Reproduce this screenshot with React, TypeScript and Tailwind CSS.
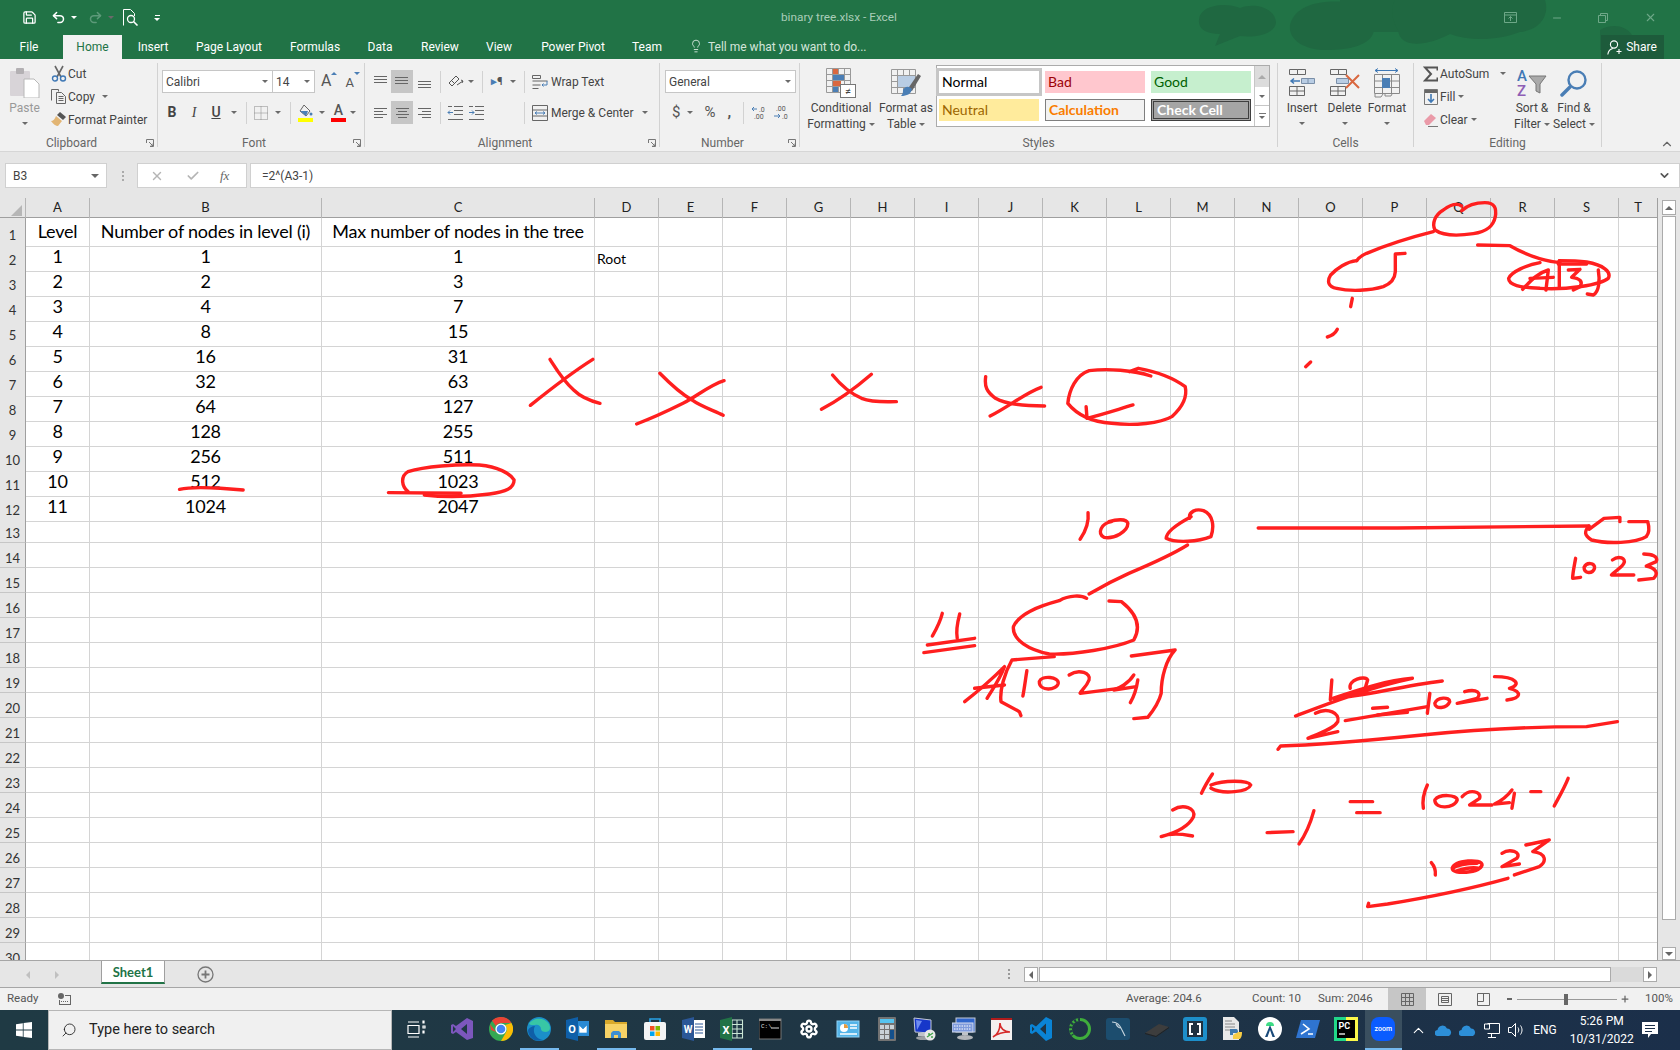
import type { ReactNode } from "react"
import { Lightbulb, Minus, Plus, Redo2, Save, Search, Settings, Undo2, X, Check, ChevronUp, ChevronDown } from "lucide-react"

const COLUMNS = ["A", "B", "C", "D", "E", "F", "G", "H", "I", "J", "K", "L", "M", "N", "O", "P", "Q", "R", "S", "T"]
const GRID = "grid grid-cols-[26px_64px_232px_273px_repeat(16,64px)_39px]"

const ROWS: string[][] = [
  ["Level", "Number of nodes in level (i)", "Max number of nodes in the tree"],
  ["1", "1", "1"],
  ["2", "2", "3"],
  ["3", "4", "7"],
  ["4", "8", "15"],
  ["5", "16", "31"],
  ["6", "32", "63"],
  ["7", "64", "127"],
  ["8", "128", "255"],
  ["9", "256", "511"],
  ["10", "512", "1023"],
  ["11", "1024", "2047"],
]

const TABS = [
  { label: "File", width: "w-[58px] mr-[5px]" },
  { label: "Home", width: "w-[59px]" },
  { label: "Insert", width: "w-[62px]" },
  { label: "Page Layout", width: "w-[90px]" },
  { label: "Formulas", width: "w-[82px]" },
  { label: "Data", width: "w-[48px]" },
  { label: "Review", width: "w-[72px]" },
  { label: "View", width: "w-[46px]" },
  { label: "Power Pivot", width: "w-[102px]" },
  { label: "Team", width: "w-[46px]" },
]

function Caret({ className = "" }: { className?: string }) {
  return <span className={`inline-block h-0 w-0 border-x-[3px] border-t-[3px] border-x-transparent border-t-[#6a6a6a] ${className}`} />
}

function Group({ width, label, launcher, children }: { width: string; label: string; launcher?: boolean; children: ReactNode }) {
  return (
    <div className={`flex h-[84px] flex-col border-r border-[#d2d2d2] ${width}`}>
      <div className="h-[73px]">{children}</div>
      <div className={`relative h-[11px] text-center text-[12px] leading-[14px] text-[#666] ${launcher ? "pr-[14px]" : ""}`}>
        {label}
        {launcher && (
          <svg className="absolute right-[3px] top-[3px]" width="8" height="8" viewBox="0 0 8 8" fill="none" stroke="#777">
            <path d="M.5 4V.5H7.5V7.5H4M3 3l4 4M4.5 7H7V4.5" />
          </svg>
        )}
      </div>
    </div>
  )
}

function Big({ width, icon, lines, caret, dim }: { width: string; icon: ReactNode; lines: string[]; caret?: boolean; dim?: boolean }) {
  return (
    <div className={`flex shrink-0 flex-col items-center pt-[4px] text-[12px] leading-[16px] ${dim ? "text-[#999]" : "text-[#444]"} ${width}`}>
      <div className="flex h-[31px] items-center">{icon}</div>
      <div className="mt-[2px] whitespace-nowrap">{lines[0]}</div>
      {lines[1] ? (
        <div className="flex items-center gap-[3px] whitespace-nowrap">
          {lines[1]}
          {caret && <Caret />}
        </div>
      ) : (
        <Caret className="mt-[6px]" />
      )}
    </div>
  )
}

function Combo({ width, text, className = "" }: { width: string; text: string; className?: string }) {
  return (
    <div className={`flex h-[23px] items-center justify-between border border-[#c6c6c6] bg-white px-[3px] text-[12px] text-[#444] ${width} ${className}`}>
      {text}
      <Caret className="mr-[1px]" />
    </div>
  )
}

function Sep({ className = "" }: { className?: string }) {
  return <span className={`h-[22px] w-px shrink-0 bg-[#d2d2d2] ${className}`} />
}

function Lines({ rows }: { rows: number[][] }) {
  return (
    <svg width="14" height="16" viewBox="0 0 14 16" stroke="#666" fill="none">
      {rows.map(([x1, x2, y]) => (
        <path key={`${x1}-${y}`} d={`M${x1} ${y}.5H${x2}`} />
      ))}
    </svg>
  )
}

function AlignBtn({ rows, on, className = "" }: { rows: number[][]; on?: boolean; className?: string }) {
  return (
    <span className={`flex h-[23px] w-[22px] shrink-0 items-center justify-center ${on ? "bg-[#c6c6c6]" : ""} ${className}`}>
      <Lines rows={rows} />
    </span>
  )
}

function PasteIcon() {
  return (
    <svg width="30" height="31" viewBox="0 0 30 31">
      <rect x="0" y="4" width="20" height="25" rx="1" fill="#d8d4d8" />
      <rect x="6" y="1" width="8" height="6" rx="1" fill="#b3b0b3" />
      <path d="M14 12h10l5 5v14H14z" fill="#fff" stroke="#b8b8b8" />
    </svg>
  )
}

function CutIcon() {
  return (
    <svg width="16" height="17" viewBox="0 0 16 17" fill="none">
      <path d="M4 1l6 11M12 1L6 12" stroke="#666" strokeWidth="1.6" />
      <circle cx="4" cy="13.5" r="2.5" stroke="#3f78b5" strokeWidth="1.4" />
      <circle cx="12" cy="13.5" r="2.5" stroke="#3f78b5" strokeWidth="1.4" />
    </svg>
  )
}

function CopyIcon() {
  return (
    <svg width="15" height="15" viewBox="0 0 15 15" fill="none" stroke="#666">
      <path d="M.5 11.5V.5h7v2M5.5 3.5h5l4 4v7h-9z" />
      <path d="M7.5 7.5h5M7.5 9.5h5M7.5 11.5h5" />
    </svg>
  )
}

function PainterIcon() {
  return (
    <svg width="16" height="15" viewBox="0 0 16 15">
      <path d="M9 0l6 5-3 3-6-5z" fill="#555" />
      <path d="M5 4l6 5-4 5c-2 0-5-2-7-5 2 0 4-2 5-5z" fill="#e2b574" />
    </svg>
  )
}

function Ink({ ds }: { ds: string[] }) {
  return (
    <>
      {ds.map((d) => (
        <path key={d} d={d} vectorEffect="non-scaling-stroke" />
      ))}
    </>
  )
}

const INK_LEFT = [
  "M440 898C470 890 500 892 540 895L596 900",
  "M1000 905C985 890 980 860 1000 845C1040 830 1120 822 1175 825C1220 830 1250 850 1260 870C1260 895 1240 905 1200 912C1150 920 1090 922 1040 915",
  "M952 908L1130 910",
]

const INK_MIDDLE = [
  "M112 508C125 535 140 570 165 600C180 620 200 632 224 640",
  "M208 508C170 540 120 590 68 646",
  "M358 550C380 580 410 615 430 630C450 650 480 662 500 676",
  "M502 572C470 585 440 620 410 640C380 660 340 685 306 702",
  "M745 555C760 580 785 610 810 625C835 638 860 635 888 635",
  "M832 553C800 590 760 630 720 658",
  "M1088 560C1085 590 1090 605 1110 625C1135 645 1180 648 1220 648",
  "M1212 592C1175 610 1140 650 1098 678",
  "M1458 558C1420 540 1360 535 1320 542C1290 555 1275 600 1272 640C1290 670 1320 695 1370 700C1420 708 1480 700 1505 680C1530 650 1540 620 1535 590C1510 565 1470 545 1430 535L1410 545",
  "M1418 645C1380 660 1345 675 1315 685L1313 650",
]

const INK_TOP_RIGHT = [
  "M665 62C680 48 700 38 735 38C765 38 770 55 766 80C760 110 740 125 700 131C660 137 610 138 585 120C575 100 585 75 610 60C630 45 650 38 665 48",
  "M580 125C520 140 440 165 380 190C365 197 355 205 350 212",
  "M350 212C320 215 290 235 272 255C260 275 265 290 290 295C330 305 390 302 430 290C455 280 465 265 466 245L466 192L495 190",
  "M713 165L810 167C850 190 900 212 960 218",
  "M900 218C860 225 815 245 806 265C805 285 840 293 900 295C980 300 1080 285 1105 265C1115 245 1090 225 1040 216C1010 212 980 212 958 212",
  "M848 298C870 275 890 250 925 240L918 300",
  "M870 265L940 262",
  "M958 212L958 295",
  "M985 240L1020 238L995 262C1020 265 1030 275 1020 290L1000 300",
  "M1075 240C1080 270 1078 305 1060 315L1042 312",
  "M955 222L1040 222",
  "M337 325L332 350",
  "M292 418C285 432 275 438 262 441",
  "M212 516L197 530",
]

const INK_BOTTOM_RIGHT = [
  "M378 98C380 125 375 150 362 178",
  "M425 125C405 130 395 160 410 172C430 178 458 155 458 130C455 115 435 118 420 125",
  "M585 110C560 130 535 155 535 175C555 190 600 185 625 170C632 140 630 105 610 92C595 85 580 95 582 115",
  "M720 144L1000 144C1150 143 1300 140 1385 138",
  "M1385 138C1375 155 1375 165 1390 180C1420 192 1480 190 1500 170C1508 155 1505 135 1503 125L1465 125",
  "M1447 125L1447 112L1415 115L1385 148",
  "M1358 235C1355 260 1352 280 1352 295L1368 292",
  "M1375 262C1380 245 1398 248 1396 265C1392 282 1375 282 1375 262",
  "M1432 240C1445 225 1460 235 1455 250C1450 265 1435 275 1430 285L1475 285",
  "M1495 222C1510 222 1525 228 1520 245L1500 258C1520 265 1525 280 1515 295L1485 300",
  "M578 195C540 230 500 255 460 280C430 300 405 320 380 342",
  "M375 355C365 345 340 345 320 362C280 378 240 400 228 440C225 480 260 510 300 522C350 525 430 505 470 480C485 440 475 400 445 365L420 363",
  "M85 400C80 430 70 455 65 468",
  "M120 402C115 430 112 450 115 475",
  "M55 495L150 475",
  "M48 518L150 497",
  "M310 530L225 540C210 580 200 630 203 665L240 695L243 707",
  "M130 665C160 630 190 590 210 560C200 600 185 630 175 655",
  "M150 625L210 615",
  "M255 572C252 600 250 625 247 648",
  "M280 605C285 585 320 590 318 610C315 632 280 635 280 605",
  "M340 585C360 565 385 580 380 600C375 620 365 630 362 640L440 625",
  "M470 585C460 610 440 625 430 630L475 620",
  "M478 600C475 630 470 650 463 668",
  "M465 528L553 510C535 540 525 590 525 640C520 670 510 690 498 712L470 716",
  "M868 600L865 660",
  "M905 625C900 600 935 585 940 600L935 625",
  "M795 708C880 660 950 620 1030 595C980 600 920 630 870 655C930 650 1000 620 1090 603",
  "M835 700C860 680 885 700 880 725C870 750 840 760 820 775L880 755",
  "M895 722C940 710 1000 695 1060 680",
  "M950 685L980 682",
  "M960 705L1020 697",
  "M1065 640L1060 700",
  "M1075 670C1080 650 1105 650 1105 665C1100 685 1075 690 1075 670",
  "M1135 635C1160 625 1170 640 1160 655L1120 670L1180 655",
  "M1195 590C1240 590 1250 615 1225 625C1250 635 1250 655 1220 660",
  "M760 808L765 798C850 795 950 780 1050 765C1180 745 1300 740 1380 740L1442 725",
  "M628 882C620 900 612 920 606 940",
  "M625 915C650 900 700 900 705 915C700 935 650 945 625 925",
  "M548 990C570 970 595 985 590 1010C580 1040 550 1060 525 1070C550 1055 575 1065 588 1068",
  "M738 1058L790 1055",
  "M832 992C825 1030 815 1065 802 1092",
  "M905 965L950 965",
  "M918 998L965 998",
  "M1060 915C1052 940 1050 965 1052 985",
  "M1075 960C1085 940 1120 945 1120 960C1115 985 1075 990 1075 960",
  "M1130 950C1145 925 1170 935 1165 955L1145 975L1190 975",
  "M1230 930C1220 950 1205 965 1195 972L1225 968",
  "M1235 940L1230 985",
  "M1268 935L1288 935",
  "M1343 895C1335 925 1325 950 1315 978",
  "M1068 1148C1075 1160 1077 1170 1076 1185",
  "M1110 1165C1115 1140 1170 1135 1170 1155C1165 1180 1110 1185 1110 1165C1125 1150 1145 1150 1160 1150M1120 1172C1135 1165 1150 1160 1165 1165",
  "M1210 1120C1225 1105 1250 1115 1240 1135L1210 1160L1245 1152",
  "M1258 1095L1305 1080L1272 1115C1300 1120 1300 1145 1285 1160L1235 1185",
  "M1222 1195C1150 1225 1050 1255 980 1272L940 1280L942 1270",
]

function TitleBar() {
  return (
    <div className="relative h-[59px] shrink-0 overflow-hidden bg-[#217346] text-white">
      <svg className="absolute left-0 top-0" width="1680" height="59" fill="#1f6841">
        <path d="M1199 20C1200 5 1225 2 1240 8C1255 2 1275 8 1276 22C1276 34 1255 38 1240 36L1215 46L1220 34C1205 34 1198 28 1199 20Z" />
        <path d="M1290 25C1295 5 1320 0 1345 2C1365 5 1372 18 1374 30C1372 45 1350 50 1325 50C1305 50 1288 40 1290 25Z" />
        <path d="M1340 0H1400V32H1340Z" />
        <path d="M1395 0H1545C1550 15 1540 30 1520 32C1500 40 1470 42 1450 34C1430 45 1400 50 1398 30C1392 20 1390 10 1395 0Z" />
        <path d="M1600 30C1610 24 1625 24 1632 35L1630 50H1600Z" />
      </svg>
      <div className="relative flex h-[35px] items-center">
        <Save className="ml-[22px]" size={15} strokeWidth={2} />
        <Undo2 className="ml-[14px]" size={15} strokeWidth={2.4} />
        <Caret className="ml-[5px] border-t-white" />
        <Redo2 className="ml-[11px] text-[#5d9a7a]" size={15} strokeWidth={2.4} />
        <Caret className="ml-[5px] border-t-[#5d9a7a]" />
        <svg className="ml-[9px]" width="16" height="17" viewBox="0 0 16 17" fill="none" stroke="#fff">
          <path d="M.5 16.5V.5h7l4 4V7" />
          <circle cx="8" cy="10" r="3.5" strokeWidth="1.3" />
          <path d="M10.5 12.5l4 4" strokeWidth="1.6" />
        </svg>
        <span className="ml-[15px] flex flex-col items-center gap-[2px]">
          <span className="h-px w-[5px] bg-white" />
          <Caret className="border-t-white" />
        </span>
        <span className="ml-[621px] text-[11.8px] text-[#a9cdb8]">binary tree.xlsx - Excel</span>
        <svg className="ml-[607px]" width="13" height="11" viewBox="0 0 13 11" fill="none" stroke="#6ea888">
          <path d="M.5 .5h12v10H.5zM.5 3h12M6.5 9V4.5M4.5 6.5l2-2 2 2" />
        </svg>
        <Minus className="ml-[34px] text-[#6ea888]" size={12} />
        <svg className="ml-[35px]" width="10" height="10" viewBox="0 0 10 10" fill="none" stroke="#6ea888">
          <path d="M2.5 2.5V.5h7v7h-2M.5 2.5h7v7h-7z" />
        </svg>
        <X className="ml-[36px] text-[#6ea888]" size={13} />
      </div>
      <div className="relative flex h-[24px] text-[12px]">
        {TABS.map((t) => (
          <div key={t.label} className={`flex items-center justify-center ${t.width} ${t.label === "Home" ? "bg-[#f1f1f1] text-[#217346]" : ""}`}>
            {t.label}
          </div>
        ))}
        <Lightbulb className="ml-[19px] mt-[4px] text-[#dceae2]" size={14} strokeWidth={1.5} />
        <span className="ml-[5px] flex items-center text-[#d3e5da]">Tell me what you want to do...</span>
        <div className="ml-[734px] flex w-[63px] items-center justify-center gap-[4px] bg-[#1d5b3b]">
          <svg width="15" height="15" viewBox="0 0 15 15" fill="none" stroke="#fff" strokeWidth="1.1">
            <circle cx="7" cy="4.5" r="3.6" />
            <path d="M.8 14.5c.5-3.500 2.600-5.500 5-6M12 9v5M9.500 11.500h5" />
          </svg>
          <span>Share</span>
        </div>
      </div>
    </div>
  )
}

function Clipboard() {
  const items = [
    { icon: <CutIcon />, text: "Cut" },
    { icon: <CopyIcon />, text: "Copy", caret: true },
    { icon: <PainterIcon />, text: "Format Painter" },
  ]
  return (
    <Group width="w-[158px]" label="Clipboard" launcher>
      <div className="flex">
        <Big width="w-[49px]" icon={<PasteIcon />} lines={["Paste"]} dim />
        <div className="-mt-px flex flex-col">
          {items.map((it) => (
            <div key={it.text} className="flex h-[23px] items-center text-[12px] text-[#444]">
              <span className="flex w-[19px] justify-center">{it.icon}</span>
              {it.text}
              {it.caret && <Caret className="ml-[7px]" />}
            </div>
          ))}
        </div>
      </div>
    </Group>
  )
}

function FontGroup() {
  return (
    <Group width="w-[207px]" label="Font" launcher>
      <div className="flex pl-[4px] pt-[7px]">
        <Combo width="w-[111px]" text="Calibri" />
        <Combo width="w-[43px]" text="14" className="-ml-px" />
        <span className="ml-[6px] mt-[1px] text-[16px] leading-[20px] text-[#555]">A</span>
        <span className="mt-[2px] h-0 w-0 border-x-[3px] border-b-[3px] border-x-transparent border-b-[#4a7eb5]" />
        <span className="ml-[8px] mt-[4px] text-[13px] leading-[18px] text-[#555]">A</span>
        <span className="mt-[2px] h-0 w-0 border-x-[3px] border-t-[3px] border-x-transparent border-t-[#4a7eb5]" />
      </div>
      <div className="mt-[8px] flex h-[23px] items-center pl-[3px] text-[14px] text-[#444]">
        <span className="w-[22px] text-center font-bold">B</span>
        <span className="w-[22px] text-center italic [font-family:'Liberation_Serif',serif]">I</span>
        <span className="w-[22px] text-center font-medium underline">U</span>
        <Caret className="ml-[4px]" />
        <Sep className="ml-[9px]" />
        <svg className="ml-[7px]" width="14" height="14" viewBox="0 0 14 14" fill="none" stroke="#888" strokeDasharray="1 1">
          <path d="M.5 .5h13v13H.5zM.5 7h13M7 .5v13" />
        </svg>
        <Caret className="ml-[7px]" />
        <Sep className="ml-[9px]" />
        <svg className="ml-[7px]" width="15" height="18" viewBox="0 0 15 18">
          <path d="M6 1l6 6-4 5-6-5z" fill="none" stroke="#666" />
          <path d="M2 7h8l-2 5z" fill="#4a7eb5" />
          <circle cx="13" cy="10" r="1.500" fill="#4a7eb5" />
          <rect y="14" width="15" height="4" fill="#ffff00" />
        </svg>
        <Caret className="ml-[6px]" />
        <span className="ml-[6px] flex flex-col items-center leading-[13px]">
          <span className="text-[14px] font-medium text-[#555]">A</span>
          <span className="mt-[1px] h-[4px] w-[15px] bg-[#ff0000]" />
        </span>
        <Caret className="ml-[4px]" />
      </div>
    </Group>
  )
}

function Alignment() {
  const full = [[0, 13, 3], [0, 13, 6], [0, 13, 9]]
  return (
    <Group width="w-[295px]" label="Alignment" launcher>
      <div className="mt-[7px] flex h-[23px] items-center pl-[4px]">
        <AlignBtn rows={[[1, 14, 2], [1, 14, 5], [1, 14, 8]]} />
        <AlignBtn rows={full} on />
        <AlignBtn rows={[[1, 14, 7], [1, 14, 10], [1, 14, 13]]} />
        <Sep className="ml-[5px]" />
        <svg className="ml-[7px]" width="16" height="16" viewBox="0 0 16 16" fill="none" stroke="#555">
          <path d="M1 9l7-7 3 3-7 7zM4 7l3 3M9 11l6-4M13 6l2 1-1 2" />
        </svg>
        <Caret className="ml-[4px]" />
        <Sep className="ml-[8px]" />
        <span className="ml-[8px] flex w-[13px] items-center text-[11px] font-bold leading-none text-[#4a7eb5]">▸<span className="text-[#555]">¶</span></span>
        <Caret className="ml-[6px]" />
        <Sep className="ml-[8px]" />
        <svg className="ml-[7px]" width="16" height="16" viewBox="0 0 16 16" fill="none" stroke="#666">
          <path d="M.5 1.500h8v3h-8zM.5 7h15M.5 11h8M.5 14.500h6" />
          <path d="M15 7v4h-5M11.500 9.500L10 11l1.500 1.500" stroke="#4a7eb5" />
        </svg>
        <span className="ml-[3px] text-[12px] text-[#444]">Wrap Text</span>
      </div>
      <div className="mt-[8px] flex h-[23px] items-center pl-[4px]">
        <AlignBtn rows={[[1, 14, 3], [1, 10, 6], [1, 14, 9], [1, 10, 12]]} />
        <AlignBtn rows={[[1, 14, 3], [3, 12, 6], [1, 14, 9], [3, 12, 12]]} on />
        <AlignBtn rows={[[1, 14, 3], [5, 14, 6], [1, 14, 9], [5, 14, 12]]} />
        <Sep className="ml-[5px]" />
        <svg className="ml-[6px]" width="16" height="14" viewBox="0 0 16 14" fill="none" stroke="#666">
          <path d="M7 .5h9M7 4.500h9M7 8.500h9M1 13.500h15M1 .5h4" />
          <path d="M6 6.500H1M3 4.500l-2 2 2 2" stroke="#4a7eb5" />
        </svg>
        <svg className="ml-[5px]" width="16" height="14" viewBox="0 0 16 14" fill="none" stroke="#666">
          <path d="M7 .5h9M7 4.500h9M7 8.500h9M1 13.500h15M1 .5h4" />
          <path d="M1 6.500h5M4 4.500l2 2-2 2" stroke="#4a7eb5" />
        </svg>
        <Sep className="ml-[40px]" />
        <svg className="ml-[7px]" width="16" height="16" viewBox="0 0 16 16" fill="none" stroke="#666">
          <path d="M.5 .5h15v15H.5zM.5 5h15M.5 11h15" />
          <path d="M3 8h10M5 6.500L3 8l2 1.500M11 6.500L13 8l-2 1.500" stroke="#4a7eb5" />
        </svg>
        <span className="ml-[3px] text-[12px] text-[#444]">Merge &amp; Center</span>
        <Caret className="ml-[9px]" />
      </div>
    </Group>
  )
}

function NumberGroup() {
  return (
    <Group width="w-[140px]" label="Number" launcher>
      <div className="pl-[5px] pt-[7px]">
        <Combo width="w-[131px]" text="General" />
      </div>
      <div className="mt-[8px] flex h-[23px] items-center pl-[12px] text-[#555]">
        <span className="text-[15px]">$</span>
        <Caret className="ml-[7px]" />
        <span className="ml-[11px] text-[15px]">%</span>
        <span className="ml-[12px] text-[15px] font-bold">,</span>
        <Sep className="ml-[12px]" />
        <svg className="ml-[7px]" width="16" height="16" viewBox="0 0 16 16" fill="#555" fontSize="7" fontFamily="Roboto">
          <text x="8" y="7">.0</text>
          <text x="3" y="14">.00</text>
          <path d="M6 4H1M3 2L1 4l2 2" fill="none" stroke="#4a7eb5" />
        </svg>
        <svg className="ml-[6px]" width="16" height="16" viewBox="0 0 16 16" fill="#555" fontSize="7" fontFamily="Roboto">
          <text x="3" y="6">.00</text>
          <text x="9" y="14">.0</text>
          <path d="M1 11h6M5 9l2 2-2 2" fill="none" stroke="#4a7eb5" />
        </svg>
      </div>
    </Group>
  )
}

function StyleCell({ text, className }: { text: string; className: string }) {
  return <div className={`flex h-[22px] items-center pb-[2px] pl-[3px] text-[14px] [font-family:Lato,sans-serif] ${className}`}>{text}</div>
}

function Styles() {
  return (
    <Group width="w-[478px]" label="Styles">
      <div className="flex">
        <Big
          width="w-[82px]"
          lines={["Conditional", "Formatting"]}
          caret
          icon={
            <svg width="30" height="30" viewBox="0 0 30 30">
              <path d="M.5 .5h24v24H.5zM.5 6.500h24M.5 12.500h24M.5 18.500h24M6.500 .5v24M12.500 .5v24M18.500 .5v24" fill="none" stroke="#999" />
              <rect x="7" y="1" width="5" height="5" fill="#d9673f" />
              <rect x="7" y="7" width="11" height="5" fill="#4a7eb5" />
              <rect x="7" y="13" width="8" height="5" fill="#d9673f" />
              <rect x="7" y="19" width="5" height="5" fill="#4a7eb5" />
              <rect x="14.500" y="16.500" width="15" height="13" fill="#fff" stroke="#777" />
              <text x="22" y="27" fontSize="11" textAnchor="middle" fill="#444">≠</text>
            </svg>
          }
        />
        <Big
          width="w-[48px]"
          lines={["Format as", "Table"]}
          caret
          icon={
            <svg width="30" height="30" viewBox="0 0 30 30">
              <path d="M.5 1.500h24v24H.5zM.5 7.500h24M.5 13.500h24M.5 19.500h24M6.500 1.500v24M12.500 1.500v24M18.500 1.500v24" fill="none" stroke="#999" />
              <rect x="7" y="8" width="17" height="11" fill="#b9cde4" />
              <path d="M16 22L27 6l3 2-9 15z" fill="#666" />
              <path d="M12 22c2-4 6-4 9-1-1 5-5 7-11 7 2-2 2-4 2-6z" fill="#4a7eb5" />
            </svg>
          }
        />
        <div className="ml-[6px] mt-[2px] flex h-[62px] w-[334px] border border-[#ababab] bg-white">
          <div className="ml-[2px] mt-[5px] grid h-[50px] w-[312px] grid-cols-3 gap-x-[6px] gap-y-[6px]">
            <StyleCell text="Normal" className="text-black outline-[3px] outline-[#c6c6c6]" />
            <StyleCell text="Bad" className="bg-[#ffc7ce] text-[#9c0006]" />
            <StyleCell text="Good" className="bg-[#c6efce] text-[#006100]" />
            <StyleCell text="Neutral" className="bg-[#ffeb9c] text-[#9c6500]" />
            <StyleCell text="Calculation" className="border border-[#7f7f7f] bg-[#f2f2f2] font-bold text-[#fa7d00]" />
            <StyleCell text="Check Cell" className="border-[3px] border-double border-[#3f3f3f] bg-[#a5a5a5] font-bold text-white" />
          </div>
          <div className="ml-[3px] flex w-[15px] flex-col border-l border-[#c6c6c6] text-[#888]">
            <div className="flex h-[21px] items-center justify-center bg-[#dcdcdc]">
              <span className="h-0 w-0 border-x-[4px] border-b-[4px] border-x-transparent border-b-[#aaa]" />
            </div>
            <div className="flex h-[19px] items-center justify-center border-b border-[#c6c6c6]">
              <Caret />
            </div>
            <div className="flex flex-1 flex-col items-center justify-center gap-[2px]">
              <span className="h-px w-[7px] bg-[#777]" />
              <Caret />
            </div>
          </div>
        </div>
      </div>
    </Group>
  )
}

function Cells() {
  const table = "M.5 .5h8v5h-8zM8.500 .5h8v5h-8z"
  return (
    <Group width="w-[136px]" label="Cells">
      <div className="flex pl-[3px]">
        <Big
          width="w-[42px]"
          lines={["Insert"]}
          icon={
            <svg width="26" height="27" viewBox="0 0 26 27" fill="none" stroke="#666">
              <path d={table} />
              <path d="M.5 17.500h15v9H.5zM8 17.500v9M.5 22h15" />
              <path d="M12.500 9.500h13v5h-13zM19 9.500v5" fill="#b9cde4" stroke="#7a8fa8" />
              <path d="M11 12H2M5 9.500L2 12l3 2.500" stroke="#3f78b5" strokeWidth="1.500" />
            </svg>
          }
        />
        <Big
          width="w-[43px]"
          lines={["Delete"]}
          icon={
            <svg width="30" height="27" viewBox="0 0 30 27" fill="none" stroke="#666">
              <path d={table} />
              <path d="M.5 17.500h15v9H.5zM8 17.500v9M.5 22h15" />
              <path d="M6.500 9.500h12v5h-12z" fill="#b9cde4" stroke="#7a8fa8" />
              <path d="M16 6l13 13M29 6L16 19" stroke="#d9673f" strokeWidth="2" />
            </svg>
          }
        />
        <Big
          width="w-[42px]"
          lines={["Format"]}
          icon={
            <svg width="26" height="30" viewBox="0 0 26 30" fill="none" stroke="#888">
              <path d="M1 2.500h23M4 .5l-3 2 3 2M21 .5l3 2-3 2" stroke="#3f78b5" />
              <path d="M.5 6.500h25v19H.5zM.5 13h25M.5 19.500h25M8.500 6.500v19M17.500 6.500v19" />
              <rect x="8" y="10" width="8" height="10" fill="#4a7eb5" stroke="none" />
              <path d="M1 26v3h6l2-3M11 26v2h6l1-2" />
            </svg>
          }
        />
      </div>
    </Group>
  )
}

function Editing() {
  const rows = [
    {
      text: "AutoSum",
      caret: "ml-[11px]",
      icon: (
        <svg width="15" height="16" viewBox="0 0 15 16" fill="none" stroke="#555" strokeWidth="2">
          <path d="M14.500 4.500V1.500H2l6 6.500-6 6.500h12.500v-3" />
        </svg>
      ),
    },
    {
      text: "Fill",
      caret: "ml-[3px]",
      icon: (
        <svg width="14" height="16" viewBox="0 0 14 16" fill="none">
          <path d="M.5 .5h13v15H.5z" stroke="#777" />
          <path d="M1 1h12v3H1z" fill="#666" />
          <path d="M7 5v8M4 10l3 3 3-3" stroke="#3f78b5" strokeWidth="1.600" />
        </svg>
      ),
    },
    {
      text: "Clear",
      caret: "ml-[3px]",
      icon: (
        <svg width="15" height="14" viewBox="0 0 15 14">
          <path d="M1 8l7-7 5 4-7 7H3z" fill="#ea9aa8" />
          <path d="M5 13.500h10" stroke="#777" />
        </svg>
      ),
    },
  ]
  return (
    <Group width="w-[188px]" label="Editing">
      <div className="flex">
        <div className="-mt-px ml-[7px] flex w-[90px] shrink-0 flex-col">
          {rows.map((r) => (
            <div key={r.text} className="flex h-[23px] items-center text-[12px] text-[#444]">
              <span className="flex w-[19px] justify-center">{r.icon}</span>
              {r.text}
              <Caret className={r.caret} />
            </div>
          ))}
        </div>
        <Big
          width="w-[42px]"
          lines={["Sort &", "Filter"]}
          caret
          icon={
            <svg width="30" height="29" viewBox="0 0 30 29">
              <text x="0" y="13" fontSize="15" fontWeight="500" fill="#3f78b5" fontFamily="Roboto">A</text>
              <text x="0" y="28" fontSize="15" fontWeight="500" fill="#8e5fb5" fontFamily="Roboto">Z</text>
              <path d="M12 8h17l-6 8v9l-4-2v-7z" fill="#aaa" stroke="#777" />
            </svg>
          }
        />
        <Big
          width="w-[42px]"
          lines={["Find &", "Select"]}
          caret
          icon={
            <svg width="28" height="28" viewBox="0 0 28 28" fill="none" stroke="#4a7eb5">
              <circle cx="17" cy="11" r="8.500" strokeWidth="2.400" />
              <path d="M10 18l-8 8" strokeWidth="3.500" strokeLinecap="round" />
            </svg>
          }
        />
      </div>
    </Group>
  )
}

function Ribbon() {
  return (
    <div className="flex h-[93px] shrink-0 border-b border-[#d6d6d6] bg-[#f1f1f1] pt-[4px]">
      <Clipboard />
      <FontGroup />
      <Alignment />
      <NumberGroup />
      <Styles />
      <Cells />
      <Editing />
      <ChevronUp className="ml-[58px] mt-[74px] text-[#666]" size={14} />
    </div>
  )
}

function FormulaBar() {
  return (
    <div className="flex h-[46px] shrink-0 bg-[#e6e6e6] pb-[10px] pt-[11px] text-[12px] text-[#444]">
      <div className="ml-[5px] flex w-[102px] items-center justify-between border border-[#d0d0d0] bg-white px-[7px]">
        B3
        <span className="h-0 w-0 border-x-[4px] border-t-[4px] border-x-transparent border-t-[#666]" />
      </div>
      <span className="ml-[15px] flex w-px flex-col justify-center gap-[2px]">
        <span className="h-[2px] w-[2px] bg-[#aaa]" />
        <span className="h-[2px] w-[2px] bg-[#aaa]" />
        <span className="h-[2px] w-[2px] bg-[#aaa]" />
      </span>
      <div className="ml-[14px] flex w-[110px] items-center border border-[#d0d0d0] bg-white">
        <X className="ml-[12px] text-[#b5b5b5]" size={14} strokeWidth={2.400} />
        <Check className="ml-[22px] text-[#b5b5b5]" size={14} strokeWidth={3} />
        <span className="ml-[20px] text-[13px] italic text-[#666] [font-family:'Liberation_Serif',serif]">fx</span>
      </div>
      <div className="ml-[3px] flex flex-1 items-center justify-between border border-[#d0d0d0] bg-white pl-[11px] pr-[8px]">
        =2^(A3-1)
        <ChevronDown className="text-[#555]" size={13} strokeWidth={3} />
      </div>
    </div>
  )
}

function Sheet() {
  return (
    <div className="flex h-[762px] shrink-0 bg-[#e6e6e6]">
      <div className="w-[1658px] overflow-hidden border-r border-[#9f9f9f] bg-white [font-family:Lato,sans-serif]">
        <div className={`${GRID} h-[20px] border-b border-[#9f9f9f] bg-[#e6e6e6] text-[13px] text-[#222]`}>
          <div className="flex items-end justify-end border-r border-[#b5b5b5] pb-[2px] pr-[3px]">
            <span className="h-0 w-0 border-b-[11px] border-l-[11px] border-b-[#b6b6b6] border-l-transparent" />
          </div>
          {COLUMNS.map((c) => (
            <div key={c} className="flex items-center justify-center border-r border-[#b5b5b5]">
              {c}
            </div>
          ))}
        </div>
        {Array.from({ length: 30 }, (_, i) => (
          <div key={i} className={`${GRID} h-[25px]`}>
            <div className={`flex items-end justify-center border-b border-r border-b-[#c6c6c6] border-r-[#9f9f9f] bg-[#e6e6e6] text-[13px] leading-[16px] text-[#333] ${i < 12 ? "pb-[3px]" : "pb-[1px]"}`}>
              {i + 1}
            </div>
            {COLUMNS.map((c, j) => {
              const value = j < 3 ? ROWS[i]?.[j] : undefined
              return (
                <div key={c} className="flex items-center justify-center overflow-visible whitespace-nowrap border-b border-r border-[#d4d4d4] pb-[1px] text-[18px] tracking-[-.22px] text-black">
                  {value}
                  {i === 1 && c === "D" && <span className="w-full pl-[2px] pt-[4px] text-[14px] tracking-normal">Root</span>}
                </div>
              )
            })}
          </div>
        ))}
      </div>
      <div className="flex w-[21px] flex-col pl-[4px] pr-[3px] pt-[2px]">
        <div className="flex h-[15px] items-center justify-center border border-[#ababab] bg-white">
          <span className="h-0 w-0 border-x-[4px] border-b-[4px] border-x-transparent border-b-[#666]" />
        </div>
        <div className="mt-[1px] h-[704px] border border-[#ababab] bg-white" />
        <div className="mt-[27px] flex h-[13px] items-center justify-center border border-[#ababab] bg-white">
          <Caret className="border-x-[4px] border-t-[4px] border-t-[#666]" />
        </div>
      </div>
    </div>
  )
}

function SheetBar() {
  return (
    <div className="flex h-[28px] shrink-0 items-start border-y border-y-[#a6a6a6] bg-[#e6e6e6]">
      <span className="ml-[26px] mt-[10px] h-0 w-0 border-y-[4px] border-r-[4px] border-y-transparent border-r-[#c0c0c0]" />
      <span className="ml-[25px] mt-[10px] h-0 w-0 border-y-[4px] border-l-[4px] border-y-transparent border-l-[#c0c0c0]" />
      <div className="ml-[42px] flex h-[23px] w-[64px] items-center justify-center border-x border-b-2 border-x-[#9f9f9f] border-b-[#217346] bg-white pt-[3px] text-[13px] font-bold text-[#217346] [font-family:Lato,sans-serif]">
        Sheet1
      </div>
      <svg className="ml-[32px] mt-[5px]" width="17" height="17" viewBox="0 0 17 17" fill="none" stroke="#777">
        <circle cx="8.500" cy="8.500" r="7.500" strokeWidth="1.300" />
        <path d="M8.500 4.500v8M4.500 8.500h8" strokeWidth="1.800" />
      </svg>
      <span className="ml-[794px] mt-[8px] flex flex-col gap-[2px]">
        <span className="h-[2px] w-[2px] bg-[#999]" />
        <span className="h-[2px] w-[2px] bg-[#999]" />
        <span className="h-[2px] w-[2px] bg-[#999]" />
      </span>
      <div className="ml-[14px] mt-[6px] flex h-[15px] w-[633px] items-stretch">
        <div className="flex w-[14px] items-center justify-center border border-[#ababab] bg-white">
          <span className="h-0 w-0 border-y-[4px] border-r-[4px] border-y-transparent border-r-[#666]" />
        </div>
        <div className="ml-px w-[572px] border border-[#ababab] bg-white" />
        <div className="w-[32px] bg-[#dadada]" />
        <div className="flex w-[14px] items-center justify-center border border-[#ababab] bg-white">
          <span className="h-0 w-0 border-y-[4px] border-l-[4px] border-y-transparent border-l-[#666]" />
        </div>
      </div>
    </div>
  )
}

function StatusBar() {
  return (
    <div className="flex h-[22px] shrink-0 items-center bg-[#f1f1f1] text-[11.500px] text-[#555]">
      <span className="ml-[7px] w-[51px]">Ready</span>
      <svg width="13" height="13" viewBox="0 0 13 13" fill="#666">
        <circle cx="3" cy="3" r="3" />
        <path d="M7 2h6v10H1V7h1v4h10V3H7zM3 8h1v1H3zm2 0h1v1H5zm2 0h1v1H7zm2 0h1v1H9z" />
      </svg>
      <span className="ml-[1055px] w-[126px]">Average: 204.6</span>
      <span className="w-[66px]">Count: 10</span>
      <span className="w-[70px] whitespace-nowrap">Sum: 2046</span>
      <div className="flex h-full w-[38px] items-center justify-center bg-[#c6c6c6]">
        <svg width="13" height="13" viewBox="0 0 13 13" fill="none" stroke="#666">
          <path d="M.5 .5h12v12H.5zM.5 4.500h12M.5 8.500h12M4.500 .5v12M8.500 .5v12" />
        </svg>
      </div>
      <svg className="ml-[12px]" width="14" height="13" viewBox="0 0 14 13" fill="none" stroke="#666">
        <path d="M.5 .5h13v12H.5zM3.500 3.500h7v6h-7zM3.500 5.500h7M3.500 7.500h7" />
      </svg>
      <svg className="ml-[25px]" width="13" height="13" viewBox="0 0 13 13" fill="none" stroke="#666">
        <path d="M.5 .5h12v12H.5zM.5 8.500h6V.5" />
      </svg>
      <span className="ml-[17px] h-[2px] w-[5px] bg-[#666]" />
      <span className="ml-[5px] flex h-[1px] w-[100px] justify-center bg-[#999]">
        <span className="-mt-[5px] ml-[-2px] h-[11px] w-[4px] bg-[#666]" />
      </span>
      <Plus className="ml-[3px] text-[#666]" size={10} strokeWidth={3} />
      <span className="ml-[15px]">100%</span>
    </div>
  )
}

const Tile = ({ children }: { children: ReactNode }) => (
  <svg width="24" height="24" viewBox="0 0 24 24">
    {children}
  </svg>
)

const TASK_ICONS: { id: string; width: string; active?: boolean; node: ReactNode }[] = [
  {
    id: "taskview",
    width: "w-[50.8px] pr-[5px]",
    node: (
      <Tile>
        <path d="M5 8.500h11v8H5zM5 5h11M5 20h11M20 9h2v2h-2zM20 4h1v2h-1zM20 14h1v2h-1z" fill="none" stroke="#fff" strokeWidth="1.200" />
      </Tile>
    ),
  },
  {
    id: "vs",
    width: "w-[38.6px]",
    node: (
      <Tile>
        <path fillRule="evenodd" d="M17 1l6 3v17l-6 2-11-8-3 2-2-1V8l2-1 3 2zM17 7l-6 5 6 5zM3 9v6l3-3z" fill="#7c57bd" />
      </Tile>
    ),
  },
  {
    id: "chrome",
    width: "w-[38.6px]",
    node: (
      <Tile>
        <circle cx="12" cy="12" r="12" fill="#34a853" />
        <path d="M12 0a12 12 0 0 1 10.400 6H12a6 6 0 0 0-5.200 3L3 3.500A12 12 0 0 1 12 0z" fill="#ea4335" />
        <path d="M22.400 6A12 12 0 0 1 12 24l5.200-9A6 6 0 0 0 16 8z" fill="#fbbc05" />
        <path d="M1 7l6 8L2 13z" fill="#ea4335" />
        <circle cx="12" cy="12" r="5.600" fill="#fff" />
        <circle cx="12" cy="12" r="4.300" fill="#4285f4" />
      </Tile>
    ),
  },
  {
    id: "edge",
    width: "w-[38.6px]",
    active: true,
    node: (
      <Tile>
        <circle cx="12" cy="12" r="12" fill="#1b8fc9" />
        <path d="M2 7C5 1 17-1 22 7c2 4 1 8-3 8-3 0-5-1-5-3 0-3-3-5-6-4-3 0-5 0-6-1z" fill="#38c6a5" />
        <path d="M8 9c-3 5 0 13 8 14-8 3-15-3-15-10 1-2 4-4 7-4z" fill="#0f5fa8" />
      </Tile>
    ),
  },
  {
    id: "outlook",
    width: "w-[38.6px]",
    node: (
      <Tile>
        <rect x="8" y="4" width="15" height="15" fill="#2a8ad4" />
        <path d="M13 8h8v8h-8zM13 8l4 4 4-4" fill="#fff" stroke="#2a8ad4" strokeWidth=".6" />
        <path d="M0 3l12-3v24L0 21z" fill="#0f5fa8" />
        <text x="6" y="16" fontSize="11" fontWeight="700" fill="#fff" textAnchor="middle" fontFamily="Roboto">O</text>
      </Tile>
    ),
  },
  {
    id: "folder",
    width: "w-[38.6px]",
    active: true,
    node: (
      <Tile>
        <path d="M1 3h8l2 2h12v16H1z" fill="#d9a92c" />
        <path d="M1 7h22v14H1z" fill="#f7d266" />
        <path d="M7 21v-5l2-2h6l2 2v5h-3v-3h-4v3z" fill="#3f8fd2" />
      </Tile>
    ),
  },
  {
    id: "store",
    width: "w-[38.6px]",
    node: (
      <Tile>
        <path d="M7 6V2h10v4" fill="none" stroke="#29a3e6" strokeWidth="1.600" />
        <rect x="1" y="5" width="22" height="18" rx="2" fill="#f4f4f4" />
        <rect x="7" y="9" width="4.500" height="4.500" fill="#f25022" />
        <rect x="12.500" y="9" width="4.500" height="4.500" fill="#7fba00" />
        <rect x="7" y="14.500" width="4.500" height="4.500" fill="#00a4ef" />
        <rect x="12.500" y="14.500" width="4.500" height="4.500" fill="#ffb900" />
      </Tile>
    ),
  },
  {
    id: "word",
    width: "w-[38.6px]",
    node: (
      <Tile>
        <rect x="10" y="3" width="13" height="18" fill="#fff" />
        <path d="M13 7h8M13 10h8M13 13h8M13 16h8" stroke="#2b5797" strokeWidth="1.200" />
        <path d="M0 3l12-3v24L0 21z" fill="#2b5797" />
        <text x="6" y="16" fontSize="10" fontWeight="700" fill="#fff" textAnchor="middle" fontFamily="Roboto">W</text>
      </Tile>
    ),
  },
  {
    id: "excel",
    width: "w-[38.6px]",
    active: true,
    node: (
      <Tile>
        <path d="M12 3h10.500v18H12zM12 7.500h10M12 12h10M12 16.500h10M17 3v18" fill="none" stroke="#c9e6d5" strokeWidth="1.100" />
        <path d="M0 3l12-3v24L0 21z" fill="#217346" />
        <text x="6" y="16.500" fontSize="11" fontWeight="700" fill="#fff" textAnchor="middle" fontFamily="Roboto">X</text>
      </Tile>
    ),
  },
  {
    id: "cmd",
    width: "w-[38.6px]",
    node: (
      <Tile>
        <rect y="2" width="22" height="20" fill="#000" stroke="#777" />
        <rect y="2" width="22" height="2" fill="#888" />
        <text x="2" y="11" fontSize="6" fill="#ddd" fontFamily="Liberation Mono">C:\</text>
        <path d="M12 11h8" stroke="#ddd" />
      </Tile>
    ),
  },
  { id: "gear", width: "w-[38.6px]", node: <Settings className="text-white" size={20} strokeWidth={2.800} /> },
  {
    id: "control",
    width: "w-[38.6px]",
    node: (
      <Tile>
        <rect x="1" y="4" width="22" height="16" fill="#54b4e8" stroke="#8fd2f5" />
        <circle cx="8" cy="11" r="4" fill="#fff" />
        <path d="M8 7v4h4a4 4 0 0 0-4-4z" fill="#e89a3c" />
        <path d="M14 8h7M14 11h7M4 17h17" stroke="#fff" strokeWidth="1.400" />
      </Tile>
    ),
  },
  {
    id: "calc",
    width: "w-[38.6px]",
    node: (
      <Tile>
        <rect x="3" width="18" height="24" rx="1" fill="#737373" />
        <rect x="5" y="2" width="14" height="4" fill="#56c4f0" />
        <path d="M5 8h4v4H5zM10 8h4v4h-4zM15 8h4v4h-4zM5 13h4v4H5zM10 13h4v4h-4zM5 18h4v4H5zM10 18h4v4h-4z" fill="#c9d2d8" />
        <rect x="15" y="13" width="4" height="9" fill="#14508c" />
      </Tile>
    ),
  },
  {
    id: "rdp",
    width: "w-[38.6px]",
    node: (
      <Tile>
        <path d="M1 1l17 2v13L2 15z" fill="#1737c9" stroke="#c3c9d6" />
        <path d="M3 3l6 1-5 9z" fill="#6e8cf0" />
        <path d="M5 16h10v3H5z" fill="#bfc3c9" />
        <ellipse cx="10" cy="21" rx="7" ry="2" fill="#9a9ea3" />
        <circle cx="17" cy="18" r="5.500" fill="#e8e8e8" />
        <path d="M14 20l6-4M15 17h2M18 20h2" stroke="#3fa34a" strokeWidth="1.400" />
      </Tile>
    ),
  },
  {
    id: "keyboard",
    width: "w-[38.6px]",
    node: (
      <Tile>
        <rect x="4" y="1" width="19" height="14" fill="#3066cc" stroke="#c3c9d6" />
        <rect y="6" width="21" height="9" fill="#7f9bdc" stroke="#d6dced" />
        <path d="M2 9h17M2 12h17" stroke="#fff" strokeDasharray="1.500 1" />
        <path d="M10 15h6v3h-6z" fill="#bfc3c9" />
        <ellipse cx="13" cy="20.500" rx="8" ry="2.500" fill="#b3b6ba" />
      </Tile>
    ),
  },
  {
    id: "pdf",
    width: "w-[38.6px]",
    node: (
      <Tile>
        <rect x="1" y="1" width="21" height="22" fill="#f4f0f0" />
        <rect x="1" y="1" width="21" height="2" fill="#b01c1c" />
        <path d="M3 20c4-2 7-7 7-14 0 5 4 9 10 9-6 0-12 1-17 5z" fill="none" stroke="#d62b2b" strokeWidth="1.600" />
      </Tile>
    ),
  },
  {
    id: "vscode",
    width: "w-[38.6px]",
    node: (
      <Tile>
        <path fillRule="evenodd" d="M17 0l6 3v18l-6 3-10-9.500L3 17l-2-1V8l2-1 4 2.500zM17 6.500L11 12l6 5.500zM3 9.500v5L5.500 12z" fill="#0a84d6" />
      </Tile>
    ),
  },
  {
    id: "ring",
    width: "w-[38.6px]",
    node: (
      <Tile>
        <circle cx="12" cy="12" r="9.500" fill="none" stroke="#3fae3c" strokeWidth="3" />
        <path d="M12 2.500A9.500 9.500 0 0 0 3 9a9.500 9.500 0 0 0 2 9" fill="none" stroke="#1f3a44" strokeWidth="3.200" strokeDasharray="2 2" />
      </Tile>
    ),
  },
  {
    id: "mysql",
    width: "w-[38.6px]",
    node: (
      <Tile>
        <rect y="1" width="24" height="22" rx="3" fill="#1c4d6e" />
        <path d="M6 5c5 0 8 3 10 8l3 6M15 11c-3 0-4-2-5-4" fill="none" stroke="#c8d6df" strokeWidth="1.100" />
      </Tile>
    ),
  },
  {
    id: "stick",
    width: "w-[38.6px]",
    node: (
      <Tile>
        <path d="M0 16L14 7l10 3-13 9z" fill="#3d3d3d" />
        <path d="M0 16l11 3 13-9v1L11 20 0 17z" fill="#222" />
      </Tile>
    ),
  },
  {
    id: "brackets",
    width: "w-[37.7px]",
    node: (
      <Tile>
        <rect width="24" height="24" rx="3" fill="#1d8fca" />
        <rect x="4" y="4" width="16" height="16" fill="#20313f" />
        <path d="M10 7H7v10h3M14 7h3v10h-3" fill="none" stroke="#fff" strokeWidth="2" />
      </Tile>
    ),
  },
  {
    id: "pyfile",
    width: "w-[37.7px]",
    node: (
      <Tile>
        <path d="M2 0h11l5 5v18H2z" fill="#e8e8e8" />
        <path d="M4 4h7M4 7h10M4 10h10M4 13h8" stroke="#888" />
        <path d="M9 12h6c2 0 2 2 2 4h-5v2H9z" fill="#3f79ad" />
        <path d="M21 15h-4c-2 2-5 2-5 4v3h7c2-2 2-5 2-7z" fill="#f6cc45" />
      </Tile>
    ),
  },
  {
    id: "android",
    width: "w-[37.7px]",
    node: (
      <Tile>
        <circle cx="12" cy="12" r="12" fill="#fff" />
        <path d="M8 9a4 4 0 0 1 8 0z" fill="#3ddc84" />
        <path d="M12 8l-5 12h2.500l2.500-7 2.500 7H17z" fill="#1a4a7a" />
      </Tile>
    ),
  },
  {
    id: "powershell",
    width: "w-[37.7px]",
    node: (
      <Tile>
        <path d="M5 3h19l-5 18H0z" fill="#2f74d0" />
        <path d="M7 7l6 5-8 5M12 17h5" fill="none" stroke="#fff" strokeWidth="1.600" />
      </Tile>
    ),
  },
  {
    id: "pycharm",
    width: "w-[37.7px]",
    node: (
      <Tile>
        <rect width="24" height="24" fill="#21d789" />
        <path d="M12 0h12v24H12z" fill="#fcf84a" />
        <rect x="3" y="3" width="18" height="18" fill="#000" />
        <text x="4.500" y="12" fontSize="9" fontWeight="700" fill="#fff" fontFamily="Roboto">PC</text>
        <path d="M5 17h6" stroke="#fff" strokeWidth="1.300" />
      </Tile>
    ),
  },
  {
    id: "zoom",
    width: "w-[37.7px]",
    active: true,
    node: (
      <span className="flex h-[24px] w-[24px] items-center justify-center rounded-[8px] bg-[#0b5cff] text-[7px] font-medium text-white">
        zoom
      </span>
    ),
  },
]

function Taskbar() {
  return (
    <div className="flex h-[40px] shrink-0 items-stretch bg-[linear-gradient(90deg,#1f3a44,#1f3545_60%,#1b2f4a)] text-white">
      <div className="flex w-[48px] items-center justify-center">
        <svg width="16" height="16" viewBox="0 0 16 16" fill="#fff">
          <path d="M0 2.200l6.800-1v6.400H0zM7.600 1.100L16 0v7.600H7.600zM0 8.400h6.800v6.400L0 13.800zM7.600 8.400H16V16l-8.400-1.100z" />
        </svg>
      </div>
      <div className="flex w-[344px] items-center border border-[#b6b6b6] bg-[#f0f0f0] text-[14.500px] text-[#222]">
        <Search className="ml-[12px] -scale-x-100 text-[#222]" size={16} strokeWidth={1.300} />
        <span className="ml-[12px]">Type here to search</span>
      </div>
      <div className="flex">
        {TASK_ICONS.map((t) => (
          <div
            key={t.id}
            className={`flex items-center justify-center border-b-2 ${t.width} ${t.active ? "border-[#76b9ed]" : "border-transparent"} ${t.id === "zoom" ? "bg-[#3a4f5f]" : ""}`}
          >
            {t.node}
          </div>
        ))}
      </div>
      <div className="flex flex-1 items-center text-[12px]">
        <ChevronUp className="ml-[8px]" size={17} strokeWidth={1.500} />
        <svg className="ml-[8px]" width="17" height="11" viewBox="0 0 17 11" fill="#2d8fd8">
          <path d="M3 11a3 3 0 0 1-.5-6A5 5 0 0 1 12 3.500 4 4 0 0 1 14 11z" />
        </svg>
        <svg className="ml-[7px]" width="17" height="11" viewBox="0 0 17 11" fill="#2d8fd8">
          <path d="M3 11a3 3 0 0 1-.5-6A5 5 0 0 1 12 3.500 4 4 0 0 1 14 11z" />
        </svg>
        <svg className="ml-[8px]" width="16" height="15" viewBox="0 0 16 15" fill="none" stroke="#fff">
          <path d="M3.500 .5h12v10h-12M7.500 10.500v3.500M4 14.500h8M.5 1h5v5h-5z" />
        </svg>
        <svg className="ml-[8px]" width="16" height="14" viewBox="0 0 16 14" fill="none" stroke="#fff">
          <path d="M.5 4.500h3l4-4v13l-4-4h-3zM10 4.500c1 1.500 1 3.500 0 5M12.500 2.500c2 3 2 6 0 9" />
        </svg>
        <span className="ml-[9px]">ENG</span>
        <div className="ml-[9px] flex w-[72px] flex-col items-center leading-[18px]">
          <span>5:26 PM</span>
          <span>10/31/2022</span>
        </div>
        <svg className="ml-[4px]" width="16" height="16" viewBox="0 0 16 16" fill="#fff">
          <path d="M0 0h16v12H9l-3 4v-4H0zM3 3v1h10V3zm0 3v1h10V6zm0 3v1h7V9z" fillRule="evenodd" />
        </svg>
      </div>
    </div>
  )
}

export default function App() {
  return (
    <div className="relative flex h-[1050px] w-[1680px] flex-col overflow-hidden bg-white [font-family:Roboto,sans-serif]">
      <TitleBar />
      <Ribbon />
      <FormulaBar />
      <Sheet />
      <SheetBar />
      <StatusBar />
      <Taskbar />
      {/* pen annotations drawn over the sheet; each group keeps the crop scale it was traced at */}
      <svg className="pointer-events-none absolute left-0 top-0" width="1680" height="1050" fill="none" stroke="#ff1f1f" strokeWidth="3.400" strokeLinecap="round" strokeLinejoin="round">
        <g transform="translate(0 190) scale(.408 .3333)">
          <Ink ds={INK_LEFT} />
        </g>
        <g transform="translate(500 190) scale(.4464 .3333)">
          <Ink ds={INK_MIDDLE} />
        </g>
        <g transform="translate(1240 190) scale(.3333)">
          <Ink ds={INK_TOP_RIGHT} />
        </g>
        <g transform="translate(900 480) scale(.4975 .3333)">
          <Ink ds={INK_BOTTOM_RIGHT} />
        </g>
      </svg>
    </div>
  )
}
